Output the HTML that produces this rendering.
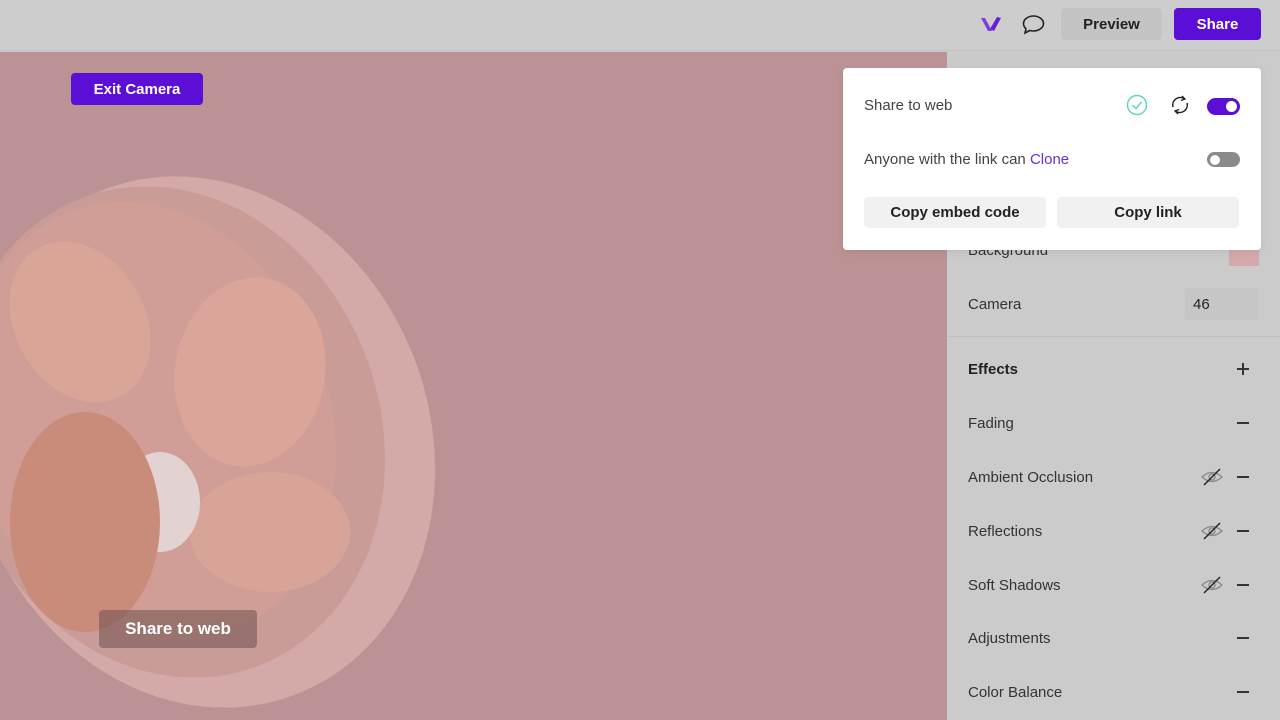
<!DOCTYPE html>
<html><head><style>
*{margin:0;padding:0;box-sizing:border-box}
body{width:1280px;height:720px;overflow:hidden;position:relative;background:#cbcbcb;font-family:"Liberation Sans",sans-serif;color:#222}
.top{position:absolute;left:0;top:0;width:1280px;height:51px;background:#cdcdcd;border-bottom:1px solid #c2c2c2}
.canvas{position:absolute;left:0;top:52px;width:947px;height:668px;background:#bc9394;overflow:hidden}
.panel{position:absolute;left:947px;top:52px;width:333px;height:668px;background:#cbcbcb}
.row{position:absolute;left:21px;font-size:15px;color:#333}
.minus{position:absolute;left:290px;width:12px;height:1.5px;background:#333}
.btn{position:absolute;border-radius:4px;font-weight:bold;font-size:15px;display:flex;align-items:center;justify-content:center}
.pop{position:absolute;left:843px;top:68px;width:418px;height:182px;background:#fff;border-radius:4px;box-shadow:0 2px 8px rgba(0,0,0,.08)}
</style></head><body>
<div class="top"></div>
<svg style="position:absolute;left:980px;top:15px" width="22" height="18" viewBox="0 0 22 18"><path d="M1 3 L8 16 L12 16 L5 3Z" fill="#7b3fe0"/><path d="M10 14 L17 2 L21 3 L14 16Z" fill="#6a1fd8"/></svg>
<svg style="position:absolute;left:1021px;top:13px" width="25" height="24" viewBox="0 0 25 24"><path d="M12.5 3c5.5 0 10 3.4 10 7.5s-4.5 7.5-10 7.5c-1.3 0-2.6-.2-3.7-.5L4 20l1-4.2C3.5 14.4 2.5 12.6 2.5 10.5 2.5 6.4 7 3 12.5 3z" fill="none" stroke="#222" stroke-width="1.6"/></svg>
<div class="btn" style="left:1061px;top:8px;width:101px;height:32px;background:#c4c4c4;color:#222;font-weight:bold">Preview</div>
<div class="btn" style="left:1174px;top:8px;width:87px;height:32px;background:#5b0fd6;color:#fff">Share</div>
<div class="canvas">
<svg width="947" height="668" style="position:absolute;left:0;top:0">
<ellipse cx="200" cy="390" rx="230" ry="270" transform="rotate(-20 200 390)" fill="#d4aaa9"/>
<ellipse cx="170" cy="380" rx="210" ry="250" transform="rotate(-20 170 380)" fill="#c99c98"/>
<ellipse cx="150" cy="370" rx="180" ry="225" transform="rotate(-20 150 370)" fill="#d09e96"/>
<ellipse cx="80" cy="270" rx="65" ry="85" transform="rotate(-30 80 270)" fill="#d9a597"/>
<ellipse cx="250" cy="320" rx="75" ry="95" transform="rotate(10 250 320)" fill="#dba699"/>
<ellipse cx="270" cy="480" rx="80" ry="60" fill="#d8a497"/>
<ellipse cx="160" cy="450" rx="40" ry="50" fill="#e2d2d2"/>
<ellipse cx="85" cy="470" rx="75" ry="110" fill="#c98c7a"/>
</svg>
<div class="btn" style="left:71px;top:21px;width:132px;height:32px;background:#5b0fd6;color:#fff">Exit Camera</div>
<div class="btn" style="left:99px;top:558px;width:158px;height:38px;background:rgba(110,80,80,.55);color:#fff;font-size:17px">Share to web</div>
</div>
<div class="panel">
<div class="row" style="top:190px">Background</div>
<div style="position:absolute;left:282px;top:190px;width:30px;height:24px;background:#d7a8ab;border-radius:2px"></div>
<div class="row" style="top:244px">Camera</div>
<div style="position:absolute;left:238px;top:236px;width:74px;height:32px;background:#c6c6c6;border-radius:3px;font-size:15px;padding:8px 0 0 8px">46</div>
<div style="position:absolute;left:0;top:284px;width:333px;height:1px;background:#c0c0c0"></div>
<div class="row" style="top:309px;font-weight:bold;color:#222">Effects</div>
<div class="minus" style="top:316px"></div><div style="position:absolute;left:295px;top:311px;width:1.5px;height:12px;background:#333"></div>
<div class="row" style="top:363px">Fading</div><div class="minus" style="top:370px"></div>
<div class="row" style="top:417px">Ambient Occlusion</div><div class="minus" style="top:424px"></div>
<div class="row" style="top:471px">Reflections</div><div class="minus" style="top:478px"></div>
<div class="row" style="top:525px">Soft Shadows</div><div class="minus" style="top:532px"></div>
<div class="row" style="top:578px">Adjustments</div><div class="minus" style="top:585px"></div>
<div class="row" style="top:632px">Color Balance</div><div class="minus" style="top:639px"></div>
<svg style="position:absolute;left:254px;top:415px" width="22" height="20" viewBox="0 0 22 20"><path d="M1 10 Q11 1 21 10 Q11 19 1 10Z" fill="none" stroke="#888" stroke-width="1.3"/><circle cx="11" cy="10" r="3" fill="none" stroke="#888" stroke-width="1.3"/><path d="M3 18 L19 2" stroke="#222" stroke-width="1.4"/></svg>
<svg style="position:absolute;left:254px;top:469px" width="22" height="20" viewBox="0 0 22 20"><path d="M1 10 Q11 1 21 10 Q11 19 1 10Z" fill="none" stroke="#888" stroke-width="1.3"/><circle cx="11" cy="10" r="3" fill="none" stroke="#888" stroke-width="1.3"/><path d="M3 18 L19 2" stroke="#222" stroke-width="1.4"/></svg>
<svg style="position:absolute;left:254px;top:523px" width="22" height="20" viewBox="0 0 22 20"><path d="M1 10 Q11 1 21 10 Q11 19 1 10Z" fill="none" stroke="#888" stroke-width="1.3"/><circle cx="11" cy="10" r="3" fill="none" stroke="#888" stroke-width="1.3"/><path d="M3 18 L19 2" stroke="#222" stroke-width="1.4"/></svg>
</div>
<div class="pop">
<div style="position:absolute;left:21px;top:29px;font-size:15px;color:#444">Share to web</div>
<svg style="position:absolute;left:283px;top:26px" width="22" height="22"><circle cx="11" cy="11" r="9.5" fill="none" stroke="#5fd4b8" stroke-width="1.4"/><path d="M6.5 11 L10 14.5 L15.5 8" fill="none" stroke="#5fd4b8" stroke-width="1.4"/></svg>
<svg style="position:absolute;left:326px;top:26px" width="22" height="22" viewBox="0 0 22 22"><path d="M4 13 A7.5 7.5 0 0 1 15 4.5 M18 9 A7.5 7.5 0 0 1 7 17.5" fill="none" stroke="#222" stroke-width="1.5"/><path d="M13 2 L16 5 L12 6.5 M9 20 L6 17 L10 15.5" fill="none" stroke="#222" stroke-width="1.3"/></svg>
<div style="position:absolute;left:364px;top:30px;width:33px;height:17px;border-radius:9px;background:#5b0fd6"><div style="position:absolute;right:3px;top:3px;width:11px;height:11px;border-radius:50%;background:#fff"></div></div>
<div style="position:absolute;left:21px;top:83px;font-size:15px;color:#444">Anyone with the link can <span style="color:#6a2ee0">Clone</span></div>
<div style="position:absolute;left:364px;top:84px;width:33px;height:15px;border-radius:8px;background:#8a8a8a"><div style="position:absolute;left:3px;top:2.5px;width:10px;height:10px;border-radius:50%;background:#fff"></div></div>
<div class="btn" style="left:21px;top:129px;width:182px;height:31px;background:#f1f1f1;color:#222">Copy embed code</div>
<div class="btn" style="left:214px;top:129px;width:182px;height:31px;background:#f1f1f1;color:#222">Copy link</div>
</div>
</body></html>
